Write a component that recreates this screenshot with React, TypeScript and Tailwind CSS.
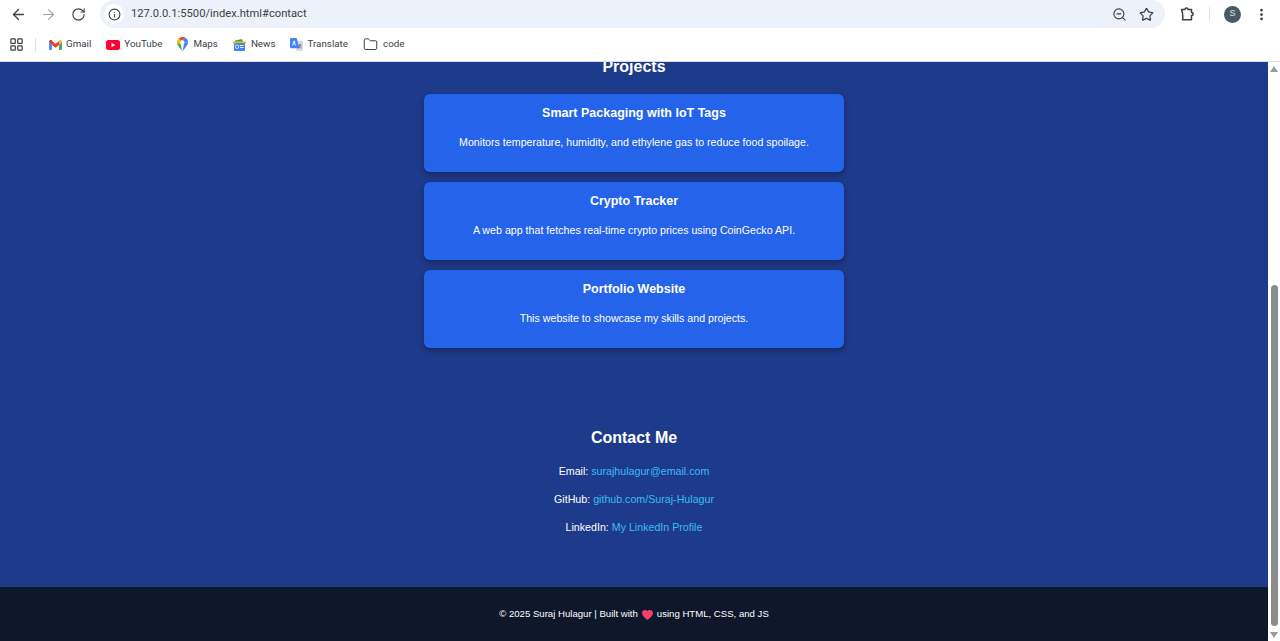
import { ArrowLeft, ArrowRight, Ellipsis, Folder, Info, LayoutGrid, RotateCw, Star, ZoomOut } from "lucide-react";

const bookmarks = [
  { name: "Gmail", gap: "gap-[4px]", icon: <GmailIcon /> },
  { name: "YouTube", gap: "gap-[4px]", icon: <YoutubeIcon /> },
  { name: "Maps", gap: "gap-[5px]", icon: <MapsIcon /> },
  { name: "News", gap: "gap-[5px]", icon: <NewsIcon /> },
  { name: "Translate", gap: "gap-[4px]", icon: <TranslateIcon /> },
];

const projects = [
  {
    title: "Smart Packaging with IoT Tags",
    text: "Monitors temperature, humidity, and ethylene gas to reduce food spoilage.",
  },
  {
    title: "Crypto Tracker",
    text: "A web app that fetches real-time crypto prices using CoinGecko API.",
  },
  {
    title: "Portfolio Website",
    text: "This website to showcase my skills and projects.",
  },
];

const contacts = [
  { label: "Email:", link: "surajhulagur@email.com" },
  { label: "GitHub:", link: "github.com/Suraj-Hulagur" },
  { label: "LinkedIn:", link: "My LinkedIn Profile" },
];

function GmailIcon() {
  return (
    <svg width="13" height="10" viewBox="0 0 14 11">
      <path d="M0 2v7.500C0 10.300.6 11 1.200 11H3V5z" fill="#4285f4" />
      <path d="M14 2v7.500c0 .8-.6 1.500-1.200 1.500H11V5z" fill="#34a853" />
      <path d="M3 5.500V1.200L7 4.200l4-3v4.300L7 8.400z" fill="#ea4335" />
      <path d="M0 2c0-1.600 1.800-2.500 3-1.500V5z" fill="#c5221f" />
      <path d="M14 2c0-1.600-1.800-2.500-3-1.500V5z" fill="#fbbc04" />
    </svg>
  );
}

function YoutubeIcon() {
  return (
    <svg width="14" height="10" viewBox="0 0 14 10">
      <rect width="14" height="10" rx="2.500" fill="#ff0033" />
      <path d="M5.500 2.800v4.400L9.300 5z" fill="#fff" />
    </svg>
  );
}

function MapsIcon() {
  return (
    <svg width="11" height="15" viewBox="0 0 11 15">
      <path d="M5.500 15C4.700 12 0 8.800 0 5.400L3 5z" fill="#34a853" />
      <path d="M5.500 15C6.300 12 11 8.800 11 5.400L7 6z" fill="#4285f4" />
      <path d="M0 5.400C0 3.600.8 2.400 1.700 1.600L5 4 2 7.500z" fill="#fbbc04" />
      <path d="M1.700 1.600C3.500-.3 6.500-.5 8.500.8L5 4z" fill="#ea4335" />
      <path d="M8.500.8C10 1.800 11 3.400 11 5.400L7 6 5 4z" fill="#4285f4" />
      <circle cx="5.500" cy="5.300" r="2" fill="#fff" />
    </svg>
  );
}

function NewsIcon() {
  return (
    <svg width="13" height="12" viewBox="0 0 13 12">
      <path d="M2 1.500 9 0l1 3H2z" fill="#34a853" />
      <rect x="0" y="2.500" width="13" height="2" fill="#fbbc04" />
      <rect x="1" y="4" width="11" height="8" rx="1" fill="#4285f4" />
      <rect x="2.600" y="6" width="3" height="3.400" rx="1.200" fill="none" stroke="#fff" strokeWidth=".8" />
      <rect x="7" y="6" width="3.500" height=".9" fill="#fff" />
      <rect x="7" y="8" width="3.500" height=".9" fill="#fff" />
    </svg>
  );
}

function TranslateIcon() {
  return (
    <svg width="13" height="13" viewBox="0 0 14 14">
      <path d="M5 3h7.500c.8 0 1.500.7 1.500 1.500v8c0 .8-.7 1.500-1.500 1.500H7z" fill="#d5d9de" />
      <path d="M1.300 0H7l3.400 11H1.300C.6 11 0 10.400 0 9.700V1.300C0 .6.6 0 1.300 0z" fill="#4285f4" />
      <path d="M5.600 8 4.800 3.200h-.4L3 8" fill="none" stroke="#fff" strokeWidth="1" />
      <path d="M9.500 7.500h3M11 6.500c0 2.200-.9 3.500-2 4.300M10 8.500c.5 1 1.200 1.700 2.500 2.300" fill="none" stroke="#5f6368" strokeWidth=".8" />
    </svg>
  );
}

function ExtensionIcon() {
  return (
    <svg width="15" height="14" viewBox="0 0 15 14" fill="none" stroke="#3c4043" strokeWidth="1.500" strokeLinejoin="round">
      <path d="M1.500 2.500H5C5 .5 8 .5 8 2.500h3.500V5.500C13.800 5.500 13.800 8.500 11.500 8.500V12.800H2.500C3.200 10.500 2.800 6.500 1.500 2.500z" />
    </svg>
  );
}

export default function App() {
  return (
    <div
      className="flex h-[641px] w-full flex-col overflow-hidden bg-white"
      style={{ fontFamily: '"Liberation Sans", Arial, sans-serif' }}
    >
      {/* Toolbar */}
      <div className="flex h-[28px] shrink-0 items-center">
        <div className="flex w-[100px] shrink-0 items-center gap-[13px] pl-[10px] pt-[1px]">
          <ArrowLeft size={17} strokeWidth={1.8} className="text-[#3c4043]" />
          <ArrowRight size={17} strokeWidth={1.5} className="text-[#a0a4a8]" />
          <RotateCw size={15} strokeWidth={1.8} className="ml-[1px] text-[#3c4043]" />
        </div>
        <div className="flex h-[28px] w-[1065px] shrink-0 items-center rounded-[14px] bg-[#edf2fa] pl-[4px] pr-[9px]">
          <span className="flex h-[20px] w-[20px] items-center justify-center rounded-full bg-white">
            <Info size={13} strokeWidth={2} className="text-[#3c4043]" />
          </span>
          <span className="ml-[7px] flex-1 pt-[1px] text-[11.2px] text-[#3c4043]" style={{ fontFamily: '"Roboto", sans-serif' }}>
            127.0.0.1:5500/index.html#contact
          </span>
          <ZoomOut size={15} strokeWidth={1.8} className="mr-[12px] text-[#3c4043]" />
          <Star size={15} strokeWidth={2} className="mr-[2px] text-[#3c4043]" />
        </div>
        <span className="ml-[15px] flex">
          <ExtensionIcon />
        </span>
        <span className="ml-[14px] h-[14px] w-[1px] bg-[#d3e3fd]" />
        <span className="ml-[14px] flex h-[17px] w-[17px] items-center justify-center rounded-full bg-[#455a64] text-[9px] text-[#e0e6ea]">
          S
        </span>
        <Ellipsis size={15} strokeWidth={2.4} className="ml-[13px] rotate-90 text-[#3c4043]" />
      </div>

      {/* Bookmarks */}
      <div className="flex h-[34px] shrink-0 items-center border-b border-[#d9dce0] pl-[9px] text-[9.8px] text-[#3c4043]" style={{ fontFamily: '"Roboto", sans-serif' }}>
        <LayoutGrid size={15} strokeWidth={2} className="text-[#3c4043]" />
        <span className="ml-[11px] mr-[13px] h-[14px] w-[1px] bg-[#d3e3fd]" />
        <div className="flex items-center gap-[15px]">
          {bookmarks.map((b) => (
            <div key={b.name} className={`flex items-center ${b.gap}`}>
              {b.icon}
              <span>{b.name}</span>
            </div>
          ))}
          <div className="flex items-center gap-[5px]">
            <Folder size={15} strokeWidth={1.6} className="text-[#3c4043]" />
            <span>code</span>
          </div>
        </div>
      </div>

      {/* Page */}
      <div className="flex min-h-0 flex-1">
        <div className="flex min-w-0 flex-1 flex-col justify-end overflow-hidden bg-[#1e3a8a] text-white">
          <section className="flex flex-col items-center">
            <h2 className="mb-[18px] text-[16px] font-bold leading-[18px]">Projects</h2>
            <div className="flex w-[420px] flex-col gap-[10px]">
              {projects.map((p) => (
                <div
                  key={p.title}
                  className="flex h-[78px] flex-col items-center rounded-[6px] bg-[#2563eb] pt-[11px] shadow-[0_3px_6px_rgba(0,0,0,0.3)]"
                >
                  <h3 className="text-[12.5px] font-bold leading-[16px]">{p.title}</h3>
                  <p className="mt-[14px] text-[10.66px] leading-[14px]">{p.text}</p>
                </div>
              ))}
            </div>
          </section>

          <section className="mt-[81px] flex flex-col items-center pb-[53px]">
            <h2 className="mb-[17px] text-[16px] font-bold leading-[18px]">Contact Me</h2>
            <div className="flex flex-col items-center gap-[14px] text-[10.66px] leading-[14px]">
              {contacts.map((c) => (
                <p key={c.label}>
                  {c.label} <a className="text-[#38bdf8]">{c.link}</a>
                </p>
              ))}
            </div>
          </section>

          <footer className="flex h-[54px] shrink-0 items-center justify-center bg-[#0f172a] pt-[1px] text-[9.6px]">
            <span>© 2025 Suraj Hulagur | Built with</span>
            <svg width="11" height="10" viewBox="0 0 24 22" className="mx-[4px]">
              <path d="M12 22C5 16 0 12 0 6.500 0 2.800 2.800 0 6.500 0 8.700 0 10.800 1 12 2.800 13.200 1 15.300 0 17.500 0 21.200 0 24 2.800 24 6.500 24 12 19 16 12 22z" fill="#f43f6e" />
            </svg>
            <span>using HTML, CSS, and JS</span>
          </footer>
        </div>

        {/* Scrollbar */}
        <div className="relative w-[12px] shrink-0 bg-white">
          <span className="absolute left-[2px] top-[4px] h-0 w-0 border-x-[4px] border-b-[6px] border-x-transparent border-b-[#9a9a9a]" />
          <span className="absolute bottom-[15px] left-[3px] top-[223px] w-[7px] rounded-full bg-[#8c8c8c]" />
          <span className="absolute bottom-[3px] left-[2px] h-0 w-0 border-x-[4px] border-t-[6px] border-x-transparent border-t-[#9a9a9a]" />
        </div>
      </div>
    </div>
  );
}
